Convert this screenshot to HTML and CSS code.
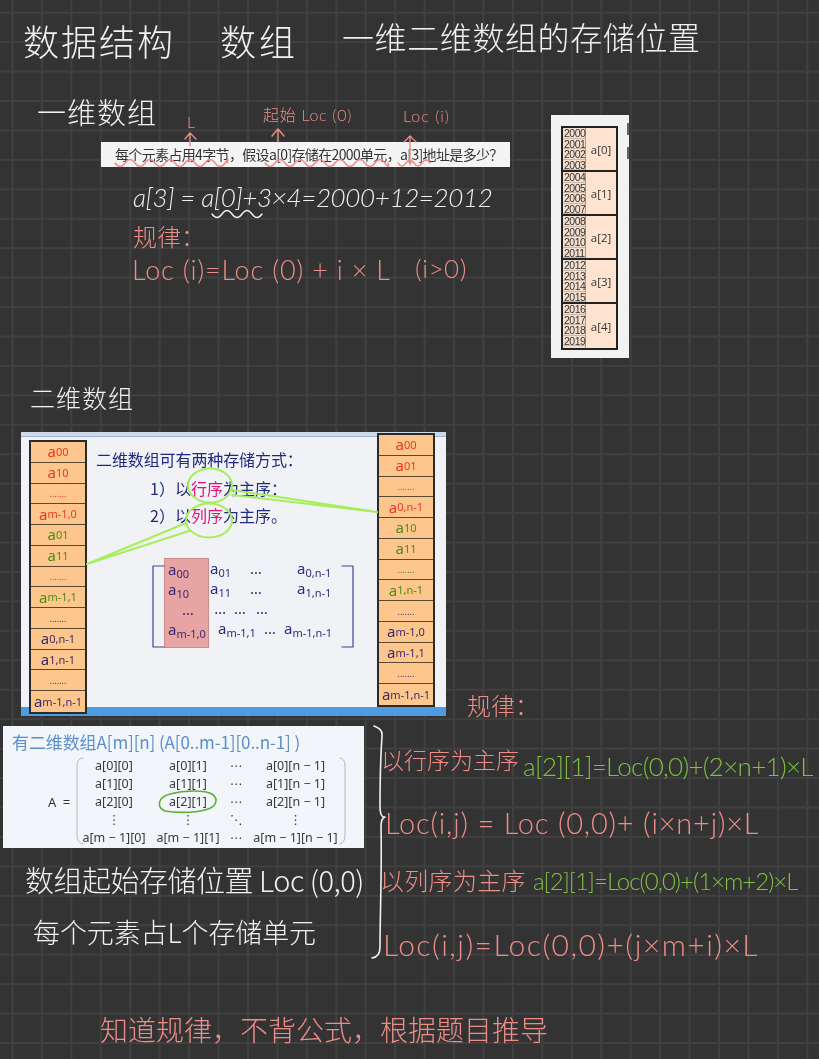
FILE: index.html
```html
<!DOCTYPE html>
<html lang="zh">
<head>
<meta charset="utf-8">
<title>数据结构 数组</title>
<link rel="stylesheet" href="styles.css">
</head>
<body>
<main class="note">
  <p class="ink white title-a">数据结构</p>
  <p class="ink white title-b">数组</p>
  <p class="ink white title-c">一维二维数组的存储位置</p>
  <p class="ink white head-1d">一维数组</p>
  <p class="ink pink lbl lbl-l">L</p>
  <p class="ink pink lbl lbl-start">起始 Loc (0)</p>
  <p class="ink pink lbl lbl-loc">Loc (i)</p>

  <div class="question">每个元素占用4字节，假设a[0]存储在2000单元，a[3]地址是多少？</div>

  <p class="ink white calc">a[3] = a[0]+3×4=2000+12=2012</p>
  <p class="ink pink rule-1">规律：</p>
  <p class="ink pink formula-1">Loc (i)=Loc (0) + i × L</p>
  <p class="ink pink formula-1b">(i&gt;0)</p>

  <section class="memory">
    <div class="mem-table">
      <div class="mem-row"><div class="addr"><span>2000</span><span>2001</span><span>2002</span><span>2003</span></div><div class="cell">a[0]</div></div>
      <div class="mem-row"><div class="addr"><span>2004</span><span>2005</span><span>2006</span><span>2007</span></div><div class="cell">a[1]</div></div>
      <div class="mem-row"><div class="addr"><span>2008</span><span>2009</span><span>2010</span><span>2011</span></div><div class="cell">a[2]</div></div>
      <div class="mem-row"><div class="addr"><span>2012</span><span>2013</span><span>2014</span><span>2015</span></div><div class="cell">a[3]</div></div>
      <div class="mem-row"><div class="addr"><span>2016</span><span>2017</span><span>2018</span><span>2019</span></div><div class="cell">a[4]</div></div>
    </div>
    <div class="mem-cut"><i></i><i></i></div>
  </section>

  <p class="ink white head-2d">二维数组</p>

  <section class="slide">
    <div class="slide-top"></div>
    <div class="slide-body">
      <ol class="stack stack-left">
        <li class="red">a<sub>00</sub></li><li class="red">a<sub>10</sub></li><li class="red dots">.......</li><li class="red">a<sub>m-1,0</sub></li>
        <li class="green">a<sub>01</sub></li><li class="green">a<sub>11</sub></li><li class="green dots">.......</li><li class="green">a<sub>m-1,1</sub></li>
        <li class="purple dots">.......</li><li class="purple">a<sub>0,n-1</sub></li><li class="purple">a<sub>1,n-1</sub></li><li class="purple dots">.......</li><li class="purple">a<sub>m-1,n-1</sub></li>
      </ol>
      <div class="slide-text">
        <h2>二维数组可有两种存储方式：</h2>
        <p>1）以<em>行序</em>为主序：</p>
        <p>2）以<em>列序</em>为主序。</p>
        <div class="matrix">
          <div class="m-col m-first"><span>a<sub>00</sub></span><span>a<sub>10</sub></span><span class="c">…</span><span>a<sub>m-1,0</sub></span></div>
          <div class="m-col m-second"><span>a<sub>01</sub></span><span>a<sub>11</sub></span><span class="c">…&nbsp;&nbsp;…</span><span class="push">a<sub>m-1,1</sub></span></div>
          <div class="m-col m-third"><span>…</span><span>…</span><span>…</span><span>…</span></div>
          <div class="m-col m-fourth"><span>a<sub>0,n-1</sub></span><span>a<sub>1,n-1</sub></span><span>&nbsp;</span><span class="pull">a<sub>m-1,n-1</sub></span></div>
        </div>
      </div>
      <ol class="stack stack-right">
        <li class="red">a<sub>00</sub></li><li class="red">a<sub>01</sub></li><li class="red dots">.......</li><li class="red">a<sub>0,n-1</sub></li>
        <li class="green">a<sub>10</sub></li><li class="green">a<sub>11</sub></li><li class="green dots">.......</li><li class="green">a<sub>1,n-1</sub></li>
        <li class="purple dots">.......</li><li class="purple">a<sub>m-1,0</sub></li><li class="purple">a<sub>m-1,1</sub></li><li class="purple dots">.......</li><li class="purple">a<sub>m-1,n-1</sub></li>
      </ol>
    </div>
    <div class="slide-bottom"></div>
  </section>

  <section class="array-def">
    <h3>有二维数组A[m][n] (A[0..m-1][0..n-1] )</h3>
    <div class="def-body">
      <span class="def-a">A =</span>
      <div class="def-grid">
        <span>a[0][0]</span><span>a[0][1]</span><span>⋯</span><span>a[0][n − 1]</span>
        <span>a[1][0]</span><span>a[1][1]</span><span>⋯</span><span>a[1][n − 1]</span>
        <span>a[2][0]</span><span>a[2][1]</span><span>⋯</span><span>a[2][n − 1]</span>
        <span>⋮</span><span>⋮</span><span>⋱</span><span>⋮</span>
        <span>a[m − 1][0]</span><span>a[m − 1][1]</span><span>⋯</span><span>a[m − 1][n − 1]</span>
      </div>
    </div>
  </section>

  <p class="ink white note-1">数组起始存储位置 Loc (0,0)</p>
  <p class="ink white note-2">每个元素占L个存储单元</p>

  <p class="ink pink rule-2">规律：</p>
  <p class="ink pink r1">以行序为主序</p>
  <p class="ink green-ink g1">a[2][1]=Loc(0,0)+(2×n+1)×L</p>
  <p class="ink pink f1">Loc(i,j) = Loc (0,0)+ (i×n+j)×L</p>
  <p class="ink pink r2">以列序为主序</p>
  <p class="ink green-ink g2">a[2][1]=Loc(0,0)+(1×m+2)×L</p>
  <p class="ink pink f2">Loc(i,j)=Loc(0,0)+(j×m+i)×L</p>
  <p class="ink pink bottom-line">知道规律，不背公式，根据题目推导</p>

  <svg class="strokes" viewBox="0 0 819 1059" aria-hidden="true">
    <g class="s-pink">
      <path d="M190 146V133M185 139l5-6 6 6"/>
      <path d="M278 142V129M272 136l6-7 6 7"/>
      <path d="M410 165V136M404 142l6-6 6 6"/>
      <path d="M115 163q5 7 10 0t10 0t10 0t10 0t10 0t10 0t10 0t10 0t10 0t10 0t10 0t2 0"/>
      <path d="M265 163q5 7 10 0t10 0t10 0t10 0t10 0t10 0t10 0t10 0t10 0t10 0t10 0t10 0t3 0"/>
      <path d="M398 163q4 6 8 0t8 0t8 0t8 0"/>
    </g>
    <path class="s-white" d="M212 214q5 7 10 0t10 0t10 0t10 0t10 0"/>
    <path class="s-white s-brace" d="M374 726q9 3 8 10c-1 15 -2 45 -2 70q0 12 5 11q-4 1-4 10c1 40 -1 90 -1 120q0 10-8 11"/>
    <g class="s-lime">
      <ellipse cx="210" cy="485.500" rx="22" ry="17"/>
      <ellipse cx="209" cy="520.500" rx="23" ry="17"/>
      <path d="M87 564L186 523M87 564L189 531"/>
      <path d="M377 512L232 490M377 512L232 495"/>
    </g>
    <g class="s-def">
      <path d="M165 811c-9-4-7-14 5-17c15-4 35-4 42 0c7 5 5 13-7 16c-12 3-30 3-40 1"/>
    </g>
    <g class="s-paren">
      <path d="M83 758q-6 0-6 8V835q0 8 6 9"/>
      <path d="M340 758q5 0 5 8V835q0 8-5 9"/>
    </g>
    <g class="s-bracket">
      <path d="M164 566h-11v81h11"/>
      <path d="M342 566h11v81h-11"/>
    </g>
  </svg>
</main>
</body>
</html>
```
FILE: styles.css
```css
* { box-sizing: border-box; }
html, body { margin: 0; padding: 0; }
body { width: 819px; height: 1059px; overflow: hidden; background: #333333; }

.note {
  position: relative;
  width: 819px;
  height: 1059px;
  overflow: hidden;
  background-color: #333333;
  background-image:
    linear-gradient(to right, #404040 2px, transparent 2px),
    linear-gradient(to bottom, #404040 2px, transparent 2px);
  background-size: 29.45px 29.45px;
  background-position: 11.5px 11.7px;
}

/* handwritten ink: each line sits at its own spot on the free canvas */
.ink {
  position: absolute;
  margin: 0;
  white-space: nowrap;
  font-family: "Noto Sans CJK SC", "Lato", sans-serif;
  font-weight: 300;
  line-height: 1;
  filter: blur(0.25px);
}
.white { color: #f1f1f1; }
.pink { color: #ee8d87; }
.green-ink { color: #7fc243; }

.title-a { left: 23px; top: 22px; font-size: 36px; letter-spacing: 2px; }
.title-b { left: 220px; top: 22px; font-size: 36px; letter-spacing: 3px; }
.title-c { left: 342px; top: 20px; font-size: 32px; letter-spacing: 0.6px; }
.head-1d { left: 37px; top: 97px; font-size: 29px; letter-spacing: 1px; }
.lbl { font-size: 16px; font-family: "Lato", "Noto Sans CJK SC", sans-serif; }
.lbl-l { left: 187px; top: 114px; }
.lbl-start { left: 263px; top: 107px; letter-spacing: 0.7px; }
.lbl-loc { left: 403px; top: 108px; letter-spacing: 1px; }
.calc { left: 133px; top: 184px; font-size: 26px; font-family: "Lato", sans-serif; font-weight: 300; font-style: italic; letter-spacing: -0.37px; }
.rule-1 { left: 133px; top: 224px; font-size: 24px; }
.formula-1 { left: 132px; top: 256px; font-size: 27px; font-family: "Lato", sans-serif; letter-spacing: 0.8px; }
.formula-1b { left: 415px; top: 255px; font-size: 26px; font-family: "Lato", sans-serif; letter-spacing: 0.5px; }
.head-2d { left: 30px; top: 385px; font-size: 25px; letter-spacing: 1px; }
.note-1 { left: 25px; top: 865px; font-size: 29px; letter-spacing: -0.5px; }
.note-2 { left: 33px; top: 918px; font-size: 27px; letter-spacing: -0.1px; }
.rule-2 { left: 467px; top: 693px; font-size: 24px; }
.r1 { left: 381px; top: 748px; font-size: 23px; }
.g1 { left: 523px; top: 753px; font-size: 26px; font-family: "Lato", sans-serif; letter-spacing: -0.7px; }
.f1 { left: 385px; top: 808px; font-size: 29px; font-family: "Lato", sans-serif; letter-spacing: 0.8px; }
.r2 { left: 380px; top: 868px; font-size: 24px; letter-spacing: 0.3px; }
.g2 { left: 533px; top: 869px; font-size: 24px; font-family: "Lato", sans-serif; letter-spacing: -1px; }
.f2 { left: 383px; top: 929px; font-size: 30px; font-family: "Lato", sans-serif; letter-spacing: 1.45px; }
.bottom-line { left: 100px; top: 1015px; font-size: 28px; }

/* pasted screenshots */
.question {
  position: absolute;
  left: 101px;
  top: 142px;
  width: 409px;
  height: 25px;
  padding-left: 14px;
  background: #f4f4f4;
  color: #333333;
  font: 14px/25px "Noto Sans CJK SC", sans-serif;
  white-space: nowrap;
  letter-spacing: -0.65px;
  filter: blur(0.3px);
}

.memory {
  position: absolute;
  left: 551px;
  top: 115px;
  width: 78px;
  height: 243px;
  padding: 11px 0 0 10px;
  background: #f2f2f2;
  overflow: hidden;
  filter: blur(0.3px);
}
.mem-table {
  width: 57px;
  height: 224px;
  border: 2px solid #222222;
  display: grid;
  grid-template-rows: repeat(5, minmax(0, 1fr));
}
.mem-row { display: flex; min-height: 0; background: #fde3d0; border-bottom: 2px solid #222222; }
.mem-row:last-child { border-bottom: 0; }
.addr {
  width: 23px;
  display: grid;
  grid-auto-rows: 10.5px;
  background: #f6dfcd;
  border-right: 1px solid #a89a8e;
  font: 10.5px/10.5px "Liberation Sans", sans-serif;
  letter-spacing: -0.5px;
  color: #333333;
}
.addr span { display: block; padding-left: 1px; border-bottom: 1px solid #cbb8a8; }
.cell {
  flex: 1;
  display: flex;
  align-items: center;
  justify-content: center;
  font: 11.5px "Open Sans", "Liberation Sans", sans-serif;
  color: #333333;
}
.mem-cut {
  position: absolute;
  right: 0;
  top: 8px;
  display: flex;
  flex-direction: column;
  gap: 12px;
}
.mem-cut i { display: block; width: 2px; height: 12px; background: #666666; }

.slide {
  position: absolute;
  left: 21px;
  top: 432px;
  width: 425px;
  height: 284px;
  background: #f0f2f5;
  display: flex;
  flex-direction: column;
  filter: blur(0.35px);
  overflow: hidden;
}
.slide-top { height: 5px; flex: none; background: #cdd9e8; border-bottom: 1px solid #9fb4d0; }
.slide-body { flex: 1; position: relative; min-height: 0; }
.slide-bottom { height: 9px; flex: none; background: #4f9be0; }
.stack {
  position: absolute;
  z-index: 1;
  margin: 0;
  padding: 0;
  list-style: none;
  width: 58px;
  height: 274px;
  border: 2px solid #2a2a2a;
  display: grid;
  grid-template-rows: repeat(13, 1fr);
  background: #fdc68c;
  font: 15px/1 "Noto Sans", "Liberation Sans", sans-serif;
}
.stack li {
  display: flex;
  align-items: center;
  justify-content: center;
  border-bottom: 1px solid #5a4a30;
}
.stack li:last-child { border-bottom: 0; }
.stack sub { font-size: 11px; vertical-align: -4px; line-height: 0; }
.stack-left { left: 8px; top: 3px; }
.stack-right { right: 11px; top: -4px; }
.red { color: #e8391f; }
.green { color: #4f8a12; }
.purple { color: #3d2b6d; }
.dots { font-size: 9px; letter-spacing: 0; }

.slide-text {
  position: absolute;
  left: 75px;
  top: 12px;
  width: 281px;
  color: #1f2a7e;
  font-family: "Noto Sans CJK SC", sans-serif;
}
.slide-text h2 { margin: 0 0 9px; font-size: 16px; font-weight: 400; line-height: 20px; letter-spacing: -0.1px; }
.slide-text p { margin: 0 0 8px 54px; font-size: 16px; line-height: 20px; }
.slide-text p + p { margin-top: -1px; }
.slide-text em { font-style: normal; color: #e0127a; }
.matrix {
  margin: 33px 0 0 68px;
  display: flex;
  font: 15px/20px "Noto Sans", sans-serif;
  color: #2c2f80;
}
.matrix sub { font-size: 11px; vertical-align: -3px; line-height: 0; }
.m-col { display: flex; flex-direction: column; }
.m-col span { white-space: nowrap; }
.c { align-self: center; }
.m-first {
  width: 45px;
  height: 90px;
  padding: 0 0 0 3px;
  background: #e8a3a3;
  border: 1px solid #cf8a8a;
  color: #3b2b70;
}
.m-second { width: 40px; margin-left: 1px; }
.push { margin-left: 8px; }
.m-third { width: 47px; }
.m-third span:nth-child(3) { margin-left: 6px; }
.m-third span:nth-child(4) { margin-left: 14px; }
.m-fourth { width: 60px; }
.pull { margin-left: -13px; }

.array-def {
  position: absolute;
  left: 3px;
  top: 726px;
  width: 361px;
  height: 122px;
  padding: 6px 0 0 9px;
  background: #f2f5fa;
  filter: blur(0.3px);
}
.array-def h3 {
  margin: 0;
  font: 400 17px/20px "Noto Sans CJK SC", "Noto Sans", sans-serif;
  color: #5c90cc;
  letter-spacing: -0.1px;
  white-space: nowrap;
}
.def-body { display: flex; align-items: center; margin-top: 5px; }
.def-a { width: 32px; margin-left: 36px; font: 13px "Noto Sans", sans-serif; color: #333333; word-spacing: 3px; }
.def-grid {
  margin-left: -1px;
  display: grid;
  grid-template-columns: 70px 78px 18px 101px;
  grid-auto-rows: 18px;
  justify-items: center;
  align-items: center;
  font: 12.5px/18px "Noto Sans", "DejaVu Sans", sans-serif;
  color: #3a3a3a;
  white-space: nowrap;
}

/* strokes drawn over the canvas */
.strokes {
  position: absolute;
  left: 0;
  top: 0;
  width: 819px;
  height: 1059px;
  fill: none;
  stroke-linecap: round;
  stroke-linejoin: round;
  pointer-events: none;
}
.s-pink { stroke: #ee8d87; stroke-width: 1.4; }
.s-white { stroke: #f1f1f1; stroke-width: 1.4; }
.s-brace { stroke-width: 1.6; }
.s-lime { stroke: #a6ee5c; stroke-width: 2; }
.s-def { stroke: #5fb030; stroke-width: 1.6; }
.s-paren { stroke: #b8b8b8; stroke-width: 1; }
.s-bracket { stroke: #3d4590; stroke-width: 1.2; }
```
